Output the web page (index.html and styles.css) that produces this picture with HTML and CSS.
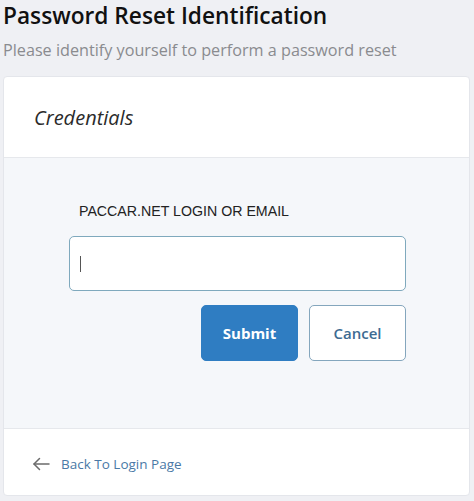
FILE: index.html
```html
<!DOCTYPE html>
<html lang="en">
<head>
    <meta charset="UTF-8">
    <meta name="viewport" content="width=device-width, initial-scale=1.0">
    <title>Password Reset Identification</title>
    <link rel="stylesheet" href="styles.css">
</head>
<body>

    <div class="page-head">
        <h1>Password Reset Identification</h1>
        <p class="subtitle">Please identify yourself to perform a password reset</p>
    </div>

    <div class="card">
        <div class="card-header">
            <h2>Credentials</h2>
        </div>

        <div class="card-body">
            <form class="reset-form">
                <label for="login">PACCAR.NET LOGIN OR EMAIL</label>
                <div class="input-box">
                    <input type="text" id="login">
                    <span class="caret"></span>
                </div>
                <div class="actions">
                    <button type="submit" class="btn btn-primary">Submit</button>
                    <button type="button" class="btn btn-outline">Cancel</button>
                </div>
            </form>
        </div>

        <div class="card-footer">
            <a href="#" class="back-link">
                <svg width="18" height="14" viewBox="0 0 18 14" fill="none" stroke="#6b6b6b" stroke-width="1.5" stroke-linecap="round" stroke-linejoin="round">
                    <path d="M17 7H2"/>
                    <path d="M7.5 1.5L2 7l5.5 5.5"/>
                </svg>
                <span>Back To Login Page</span>
            </a>
        </div>
    </div>

</body>
</html>
```

FILE: styles.css
```css
body {
    font-family: 'Open Sans', 'Noto Sans', sans-serif;
    margin: 0;
    padding: 0;
    background-color: #eff0f4;
    width: 474px;
    height: 501px;
    overflow: hidden;
}

.page-head {
    padding: 0 3px;
}

h1 {
    margin: 0;
    font-size: 22.7px;
    font-weight: 600;
    line-height: 31px;
    color: #111;
}

.subtitle {
    margin: 7px 0 0;
    font-size: 16.2px;
    line-height: 24px;
    color: #8a8b8f;
}

.card {
    margin: 14px 4px 0 3px;
    background-color: #fff;
    border: 1px solid #e4e6eb;
    border-radius: 4px;
    overflow: hidden;
}

.card-header {
    height: 80px;
    display: flex;
    align-items: center;
    padding-left: 30px;
    border-bottom: 1px solid #e6e8ec;
}

h2 {
    margin: 0;
    font-size: 20px;
    font-weight: 400;
    font-style: italic;
    color: #2b2b2b;
}

.card-body {
    background-color: #f5f7fa;
    height: 270px;
    border-bottom: 1px solid #e6e8ec;
}

.reset-form {
    padding: 44px 0 0 65px;
    width: 337px;
}

.reset-form label {
    display: block;
    font-family: 'Liberation Sans', Arial, sans-serif;
    font-size: 14.2px;
    color: #222;
    margin-left: 10px;
    line-height: 18px;
}

.input-box {
    position: relative;
    margin-top: 16px;
}

.input-box input {
    display: block;
    width: 100%;
    height: 55px;
    box-sizing: border-box;
    border: 1px solid #7fa9bd;
    border-radius: 5px;
    background-color: #fff;
    padding: 0 12px;
    font-size: 15px;
    outline: none;
}

.caret {
    position: absolute;
    left: 11px;
    top: 20px;
    width: 1px;
    height: 16px;
    background-color: #555;
}

.actions {
    display: flex;
    justify-content: flex-end;
    gap: 11px;
    margin-top: 14px;
}

.btn {
    width: 97px;
    height: 56px;
    border-radius: 5px;
    font-family: 'Open Sans', 'Noto Sans', sans-serif;
    font-size: 15px;
    cursor: pointer;
}

.btn-primary {
    background-color: #2f7dc2;
    border: 1px solid #2f7dc2;
    color: #fff;
    font-weight: 700;
}

.btn-outline {
    background-color: #fff;
    border: 1px solid #84a6bd;
    color: #3d6b92;
    font-weight: 600;
}

.card-footer {
    height: 62px;
    display: flex;
    align-items: center;
    padding-left: 28px;
    padding-top: 4px;
}

.back-link {
    display: flex;
    align-items: center;
    gap: 11px;
    text-decoration: none;
    color: #4a79a6;
    font-size: 13.5px;
}
```
